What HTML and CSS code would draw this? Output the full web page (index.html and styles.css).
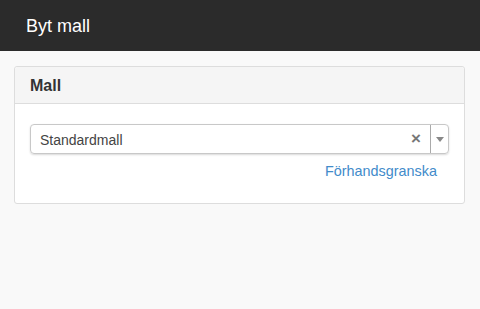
FILE: index.html
```html
<!DOCTYPE html>
<html>
<head>
<meta charset="utf-8">
<link rel="stylesheet" href="styles.css">
</head>
<body>
<header class="topbar"><h1 class="title">Byt mall</h1></header>
<section class="panel">
  <div class="panel-heading">Mall</div>
  <div class="panel-body">
    <div class="select">
      <span class="select-value">Standardmall</span>
      <span class="select-clear">×</span>
      <span class="select-arrow"><svg width="8" height="5" viewBox="0 0 8 5"><path d="M0 0h8L4 5z" fill="#888"/></svg></span>
    </div>
    <div class="actions"><a class="preview" href="#">Förhandsgranska</a></div>
  </div>
</section>
</body>
</html>
```
FILE: styles.css
```css
html, body { margin: 0; padding: 0; }
body {
  background: #f9f9f9;
  font-family: "Liberation Sans", Arial, sans-serif;
  color: #333;
  width: 480px;
  height: 309px;
}
.topbar {
  background: #2b2b2b;
  height: 51px;
  box-sizing: border-box;
  padding-top: 2px;
  display: flex;
  align-items: center;
  padding-left: 26px;
}
.title {
  margin: 0;
  color: #fff;
  font-size: 18px;
  font-weight: normal;
}
.panel {
  margin: 15px 15px 0 14px;
  background: #fff;
  border: 1px solid #ddd;
  border-radius: 3px;
}
.panel-heading {
  background: #f5f5f5;
  border-bottom: 1px solid #ddd;
  height: 37px;
  box-sizing: border-box;
  padding-top: 2px;
  display: flex;
  align-items: center;
  padding-left: 15px;
  font-size: 16px;
  font-weight: bold;
  color: #333;
  border-radius: 3px 3px 0 0;
}
.panel-body {
  padding: 20px 15px 0 15px;
  height: 79px;
}
.select {
  height: 28px;
  box-sizing: content-box;
  border: 1px solid #c8c8c8;
  border-radius: 4px;
  box-shadow: 0 1px 2px rgba(0,0,0,0.15);
  display: flex;
  align-items: center;
  font-size: 14px;
}
.select-value { flex: 1; padding-left: 9px; padding-top: 1px; color: #444; }
.select-clear {
  color: #777;
  font-size: 17px;
  font-weight: bold;
  width: 18px;
  text-align: center;
  margin-right: 5px;
}
.select-arrow {
  border-left: 1px solid #aaa;
  height: 100%;
  width: 17px;
  display: flex;
  align-items: center;
  justify-content: center;
}
.actions {
  display: flex;
  justify-content: flex-end;
  padding-top: 9px;
  padding-right: 12px;
}
.preview {
  color: #428bca;
  text-decoration: none;
  font-size: 14.4px;
}
```
